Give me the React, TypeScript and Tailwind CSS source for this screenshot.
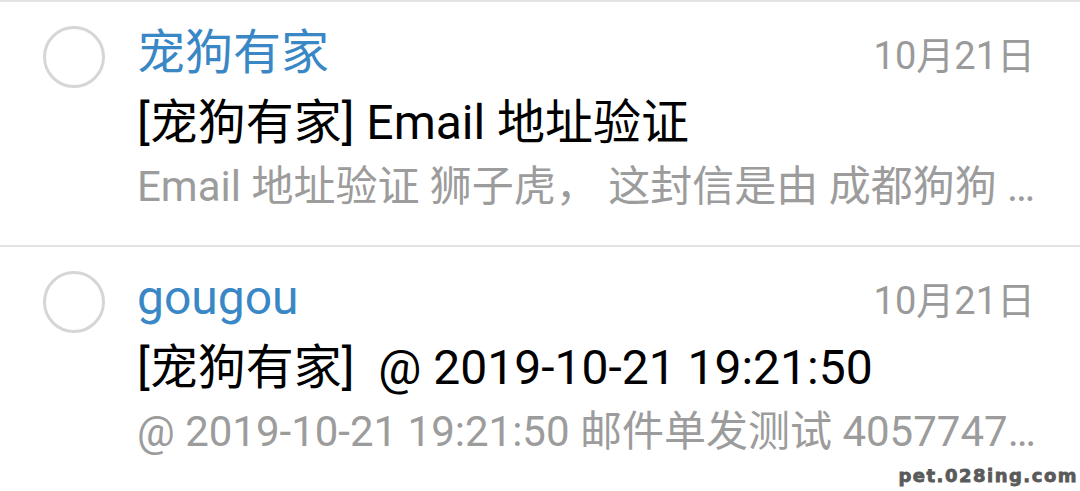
import React from 'react';

interface MailRowProps {
  sender: string;
  date: string;
  subject: string;
  preview: string;
}

function MailRow({ sender, date, subject, preview }: MailRowProps) {
  return (
    <div className="flex items-start">
      <div className="ml-[43px] mt-[24px] h-[62px] w-[62px] shrink-0 rounded-full border-[3px] border-[#d6d6d6]" />
      <div className="ml-[32px] mr-[45px] min-w-0 flex-1 pt-[15px] pb-[28px]">
        <div className="flex items-baseline justify-between">
          <span className="text-[48px] leading-[72px] text-[#3a87c6]">{sender}</span>
          <span className="text-[38px] text-[#9a9a9a]">{date}</span>
        </div>
        <div className="overflow-hidden whitespace-pre text-[48px] leading-[68px] text-black">
          {subject}
        </div>
        <div className="overflow-hidden whitespace-pre text-[42px] leading-[60px] text-[#9c9c9c]">
          {preview}
        </div>
      </div>
    </div>
  );
}

export default function App() {
  return (
    <div className="relative h-[491px] w-full overflow-hidden bg-white font-['Roboto','Noto_Sans_CJK_SC',sans-serif]">
      <div className="h-[2px] bg-[#e3e3e3]" />
      <MailRow
        sender="宠狗有家"
        date="10月21日"
        subject="[宠狗有家] Email 地址验证"
        preview="Email 地址验证 狮子虎， 这封信是由 成都狗狗 …"
      />
      <div className="h-[2px] bg-[#e3e3e3]" />
      <MailRow
        sender="gougou"
        date="10月21日"
        subject="[宠狗有家]  @ 2019-10-21 19:21:50"
        preview="@ 2019-10-21 19:21:50 邮件单发测试 4057747…"
      />
      <span className="absolute bottom-[2px] right-[2px] font-['DejaVu_Sans',sans-serif] text-[18px] font-bold tracking-[1.5px] text-[#5a5a5a] [-webkit-text-stroke:0.8px_#5a5a5a] [text-shadow:0_0_2px_#fff,0_0_2px_#fff]">
        pet.028ing.com
      </span>
    </div>
  );
}
